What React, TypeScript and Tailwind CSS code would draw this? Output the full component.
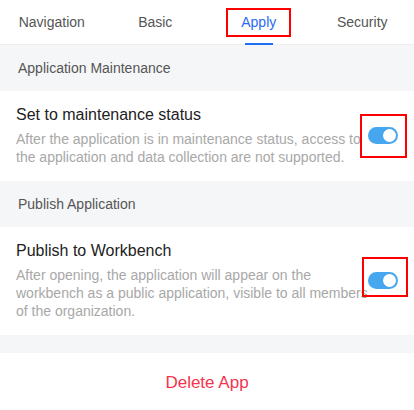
import React from "react";

const tabs = ["Navigation", "Basic", "Apply", "Security"];

function Toggle({ boxClass }: { boxClass: string }) {
  return (
    <div className="relative mt-[1px] shrink-0">
      <div className="flex h-[17px] w-[30px] items-center justify-end rounded-full bg-[#46a6ee] pr-[2px]">
        <div className="h-[13px] w-[13px] rounded-full bg-white" />
      </div>
      {/* annotation box */}
      <div className={`absolute border-2 border-[#ff0000] ${boxClass}`} />
    </div>
  );
}

function Row({
  title,
  desc,
  boxClass,
}: {
  title: string;
  desc: string;
  boxClass: string;
}) {
  return (
    <div className="flex items-center bg-white pb-[15px] pl-4 pr-4 pt-[13px]">
      <div className="flex-1">
        <div className="text-[16px] leading-[22px] text-[#222]">{title}</div>
        <div className="mt-[4px] text-[14px] leading-[18px] text-[#a8a8a8]">{desc}</div>
      </div>
      <Toggle boxClass={boxClass} />
    </div>
  );
}

function SectionHeader({ label }: { label: string }) {
  return (
    <div className="flex h-[46px] items-center bg-[#f5f6f8] px-[18px] text-[14px] text-[#555]">
      {label}
    </div>
  );
}

export default function App() {
  return (
    <div
      className="min-h-[410px] w-[414px] bg-white"
      style={{ fontFamily: '"Liberation Sans", Arial, sans-serif' }}
    >
      {/* Tabs */}
      <div className="grid h-[45px] grid-cols-4 border-b border-[#eeeeee] bg-white">
        {tabs.map((t) => {
          const active = t === "Apply";
          return (
            <div key={t} className="relative flex items-center justify-center">
              {active ? (
                <span className="border-2 border-[#ff0000] px-[13px] py-[4px] text-[14px] leading-[17px] text-[#2a6bf2]">
                  {t}
                </span>
              ) : (
                <span className="text-[14px] leading-[17px] text-[#555]">{t}</span>
              )}
              {active && (
                <div className="absolute bottom-[-1px] left-1/2 h-[2px] w-[28px] -translate-x-1/2 bg-[#1f6ff5]" />
              )}
            </div>
          );
        })}
      </div>

      <SectionHeader label="Application Maintenance" />
      <Row
        title="Set to maintenance status"
        desc="After the application is in maintenance status, access to the application and data collection are not supported."
        boxClass="-left-[8px] -top-[13px] h-[44px] w-[47px]"
      />
      <SectionHeader label="Publish Application" />
      <Row
        title="Publish to Workbench"
        desc="After opening, the application will appear on the workbench as a public application, visible to all members of the organization."
        boxClass="-left-[6px] -top-[15px] h-[40px] w-[46px] bg-white/0"
      />
      <div className="h-[18px] bg-[#f5f6f8]" />
      <div className="flex h-[58px] items-center justify-center bg-white pt-[2px] text-[17px] text-[#f5334d]">
        Delete App
      </div>
    </div>
  );
}
